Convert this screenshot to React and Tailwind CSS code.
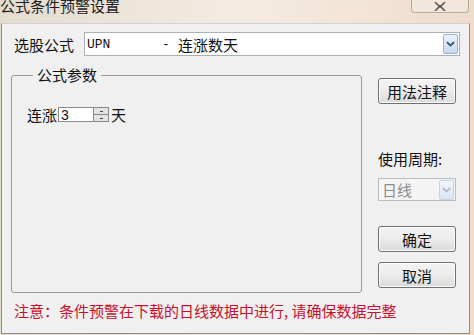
import React from 'react';

const cjk = "font-['Noto_Sans_CJK_SC','Noto_Sans',sans-serif]";

function Chevron({ color = '#2b4a77' }) {
  return (
    <svg width="9" height="6" viewBox="0 0 9 6">
      <path d="M1 1.2 L4.5 4.6 L8 1.2" fill="none" stroke={color} strokeWidth="1.8" />
    </svg>
  );
}

function DropButton({ disabled }) {
  return (
    <div
      className={`w-[15px] h-[20px] flex items-center justify-center border rounded-[2px] ${
        disabled
          ? 'border-[#c5d3e3] bg-gradient-to-b from-[#f1f6fb] to-[#d9e6f3]'
          : 'border-[#98b3d3] bg-gradient-to-b from-[#eaf2fb] to-[#c7daf0]'
      }`}
    >
      <Chevron color={disabled ? '#a7b8cc' : '#2b4a77'} />
    </div>
  );
}

function Button({ children }) {
  return (
    <div className="w-[78px] h-[26px] flex items-center justify-center rounded-[3px] border border-[#707070] bg-gradient-to-b from-[#f4f4f4] via-[#ececec] to-[#dadada] text-[15px] leading-none text-[#111] shadow-[inset_0_0_0_1px_#fcfcfc]">
      {children}
    </div>
  );
}

export default function App() {
  return (
    <div className={`w-[474px] h-[335px] overflow-hidden bg-gradient-to-r from-[#e4dccf] via-[#f4ece2] to-[#f0dccb] ${cjk}`}>
      {/* 标题栏 */}
      <div className="h-[23px] flex items-start justify-between">
        <span className="text-[15px] leading-[15px] -mt-[2px] text-[#1d1d1d]">公式条件预警设置</span>
        <div className="mr-[5px] w-[58px] h-[13px] border border-t-0 border-[#b2a89c] rounded-b-[4px] flex items-center justify-center bg-[#f3ece4]/60">
          <svg width="14" height="9" viewBox="0 0 14 9">
            <path d="M2 0 L7 5 L12 0 M2 9 L7 4 L12 9" fill="none" stroke="#5a5a5a" strokeWidth="1.6" />
          </svg>
        </div>
      </div>

      {/* 客户区 */}
      <div className="ml-[1px] w-[469px] h-[311px] bg-[#f0f0f0] border border-[#8c8c8c] border-t-[#d2d2d2] flex flex-col">
        {/* 选股公式 */}
        <div className="flex items-center mt-[8px] pl-[12px]">
          <span className="text-[15px] leading-none text-[#111] w-[70px]">选股公式</span>
          <div className="w-[376px] h-[24px] bg-white border border-[#aab0b5] flex items-center justify-between pl-[2px] pr-[1px]">
            <div className="flex items-center text-[#111]">
              <span className="font-['Liberation_Mono',monospace] text-[13px] leading-none w-[75px]">UPN</span>
              <span className="font-['Liberation_Mono',monospace] text-[13px] leading-none w-[16px]">-</span>
              <span className="text-[15px] leading-none">连涨数天</span>
            </div>
            <DropButton />
          </div>
        </div>

        <div className="flex mt-[23px]">
          {/* 公式参数 分组框 */}
          <fieldset className="ml-[9px] w-[351px] h-[226px] border border-[#9a9a9a] rounded-[3px] px-[15px] -mt-[12px]">
            <legend className="px-[4px] ml-[6px] text-[15px] leading-[16px] text-[#111]">公式参数</legend>
            <div className="flex items-center mt-[24px] text-[15px] leading-none text-[#111]">
              <span>连涨</span>
              <div className="ml-[1px] w-[36px] h-[15px] bg-white border border-[#8a8a8a] flex items-center pl-[2px] text-[14px] font-['Liberation_Sans',sans-serif]">3</div>
              <div className="w-[15px] h-[15px] flex flex-col border border-[#8a8a8a] border-l-0 bg-[#e4e4e4]">
                <div className="flex-1 border-b border-[#8a8a8a] flex items-center justify-center">
                  <div className="w-[3px] h-[1px] bg-[#444]" />
                </div>
                <div className="flex-1 flex items-center justify-center">
                  <div className="w-[3px] h-[1px] bg-[#444]" />
                </div>
              </div>
              <span className="ml-[2px]">天</span>
            </div>
          </fieldset>

          {/* 右侧 */}
          <div className="ml-[16px] flex flex-col -mt-[1px]">
            <Button>用法注释</Button>
            <span className="mt-[47px] text-[15px] leading-none text-[#111]">使用周期:</span>
            <div className="mt-[12px] w-[78px] h-[23px] border border-[#b9bdc1] bg-[#f4f4f4] flex items-center justify-between pl-[3px] pr-[1px]">
              <span className="text-[15px] leading-none text-[#8c8c8c]">日线</span>
              <DropButton disabled />
            </div>
            <div className="mt-[25px]">
              <Button>确定</Button>
            </div>
            <div className="mt-[10px]">
              <Button>取消</Button>
            </div>
          </div>
        </div>

        {/* 提示 */}
        <div className="mt-[10px] pl-[12px] text-[15px] leading-none text-[#c8102e]">
          注意：条件预警在下载的日线数据中进行, 请确保数据完整
        </div>
      </div>
    </div>
  );
}
